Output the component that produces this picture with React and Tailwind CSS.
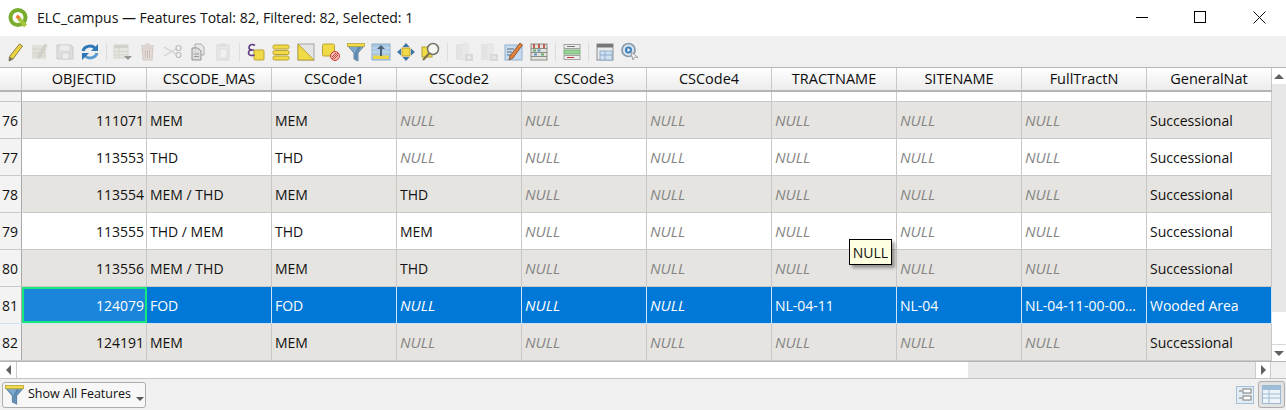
const columns = ['OBJECTID', 'CSCODE_MAS', 'CSCode1', 'CSCode2', 'CSCode3', 'CSCode4', 'TRACTNAME', 'SITENAME', 'FullTractN', 'GeneralNat']

const rows = [
  { n: 76, v: ['111071', 'MEM', 'MEM', null, null, null, null, null, null, 'Successional'] },
  { n: 77, v: ['113553', 'THD', 'THD', null, null, null, null, null, null, 'Successional'] },
  { n: 78, v: ['113554', 'MEM / THD', 'MEM', 'THD', null, null, null, null, null, 'Successional'] },
  { n: 79, v: ['113555', 'THD / MEM', 'THD', 'MEM', null, null, null, null, null, 'Successional'] },
  { n: 80, v: ['113556', 'MEM / THD', 'MEM', 'THD', null, null, null, null, null, 'Successional'] },
  { n: 81, selected: true, v: ['124079', 'FOD', 'FOD', null, null, null, 'NL-04-11', 'NL-04', 'NL-04-11-00-00...', 'Wooded Area'] },
  { n: 82, v: ['124191', 'MEM', 'MEM', null, null, null, null, null, null, 'Successional'] },
]

function Icon({ children, size = 20, dim }) {
  return <svg width={size} height={size} viewBox="0 0 20 20" className={dim ? 'opacity-70' : ''}>{children}</svg>
}

function Funnel({ size = 20 }) {
  return (
    <Icon size={size}>
      <path d="M2 4h16l-6 7v8l-4-2v-6z" fill="#7fa8cc" stroke="#5d82a5" />
      <path d="M9 11v6l2 1v-7l4-6h-3z" fill="#5a87ae" />
      <rect x="1.500" y="1.500" width="17" height="3" fill="#f1dc4c" stroke="#b7a53a" strokeWidth="0.8" />
    </Icon>
  )
}

function Sep() {
  return <div className="ml-[4px] mr-[3px] h-[18px] w-px bg-[#dcdcdc]" />
}

function Tool({ children }) {
  return <div className="flex h-[24px] w-[25px] items-center justify-center">{children}</div>
}

function Toolbar() {
  return (
    <div className="flex h-[31px] items-center bg-[#f0f0f0] pl-[2px]">
      <Tool>
        <Icon>
          <path d="M14.500 2l3 2L8 17l-4 2 .5-4.500z" fill="#ecd342" stroke="#8a8044" />
          <path d="M4.500 14.500L8 17l-4 2z" fill="#77736a" />
        </Icon>
      </Tool>
      <Tool>
        <Icon dim>
          <rect x="2" y="3" width="14" height="14" fill="#dcdbd0" />
          <path d="M2 7h14M2 11h14M2 14h14" stroke="#c8c7bb" />
          <path d="M15 2l2 1.500L10 15l-2 1 .3-2.500z" fill="#c9c8c0" stroke="#b4b3aa" strokeWidth="0.7" />
        </Icon>
      </Tool>
      <Tool>
        <Icon dim>
          <path d="M2 3h14l2 2v12H2z" fill="#d5d5d5" stroke="#bdbdbd" />
          <rect x="5" y="3.500" width="9" height="5" fill="#ececec" />
          <rect x="7" y="11" width="7" height="6" fill="#ececec" stroke="#bdbdbd" strokeWidth="0.7" />
        </Icon>
      </Tool>
      <Tool>
        <Icon>
          <path d="M3 9a7 6 0 0 1 12-3" fill="none" stroke="#2f78b7" strokeWidth="3" />
          <path d="M17 11a7 6 0 0 1-12 3" fill="none" stroke="#5a9ad0" strokeWidth="3" />
          <path d="M18 2v7h-7zM2 18v-7h7z" fill="#2f78b7" />
        </Icon>
      </Tool>
      <Sep />
      <Tool>
        <Icon dim>
          <rect x="1" y="3" width="14" height="13" fill="#e3e2da" stroke="#c9c8bf" />
          <rect x="1" y="3" width="14" height="3" fill="#c4c3ba" />
          <path d="M1 9.500h14M1 13h14M6 6v10" stroke="#c9c8bf" />
          <path d="M11 14h8l-4 4z" fill="#6f6f6f" />
        </Icon>
      </Tool>
      <Tool>
        <Icon dim>
          <rect x="3" y="3" width="13" height="2.500" fill="#d6c9c2" />
          <rect x="7" y="1.500" width="5" height="2" fill="#d6c9c2" />
          <path d="M4 6h11l-1 12H5z" fill="#dcd0ca" stroke="#c9bab2" />
          <path d="M7.500 8v8M9.500 8v8M11.500 8v8" stroke="#bdaca3" />
        </Icon>
      </Tool>
      <Tool>
        <Icon dim>
          <path d="M1 5l12 7M1 14l12-7" stroke="#c4c4c4" strokeWidth="1.200" />
          <circle cx="15.500" cy="6" r="2.500" fill="none" stroke="#a9a9a9" strokeWidth="1.200" />
          <circle cx="15.500" cy="13" r="2.500" fill="none" stroke="#a9a9a9" strokeWidth="1.200" />
        </Icon>
      </Tool>
      <Tool>
        <Icon>
          <path d="M7 2h6l3 3v8H7z" fill="#e8e8e8" stroke="#ababab" />
          <path d="M4 6h6l3 3v9H4z" fill="#dcdcdc" stroke="#949494" />
          <path d="M6 12h5M6 14.500h5" stroke="#9a9a9a" />
        </Icon>
      </Tool>
      <Tool>
        <Icon dim>
          <rect x="4" y="3" width="12" height="15" fill="#e5e5e5" stroke="#cfcfcf" />
          <rect x="7" y="1.500" width="6" height="3" fill="#d5d5d5" />
          <rect x="7" y="7" width="7" height="9" fill="#f0f0f0" stroke="#d5d5d5" />
        </Icon>
      </Tool>
      <Sep />
      <Tool>
        <Icon>
          <rect x="8" y="8" width="10" height="10" rx="1" fill="#f1da48" stroke="#b8a233" />
          <path d="M9 3.500C6 1.500 3 3 3 5.500c0 1.500 1 2.500 3 2.500-2.500 0-3.500 1.500-3.500 3s2 3.500 6 2" fill="none" stroke="#5f3a80" strokeWidth="1.600" />
          <path d="M3 8h5" stroke="#5f3a80" strokeWidth="1.400" />
        </Icon>
      </Tool>
      <Tool>
        <Icon>
          <rect x="2" y="3" width="16" height="4" rx="1.500" fill="#f1da48" stroke="#b8a233" />
          <rect x="2" y="8.500" width="16" height="4" rx="1.500" fill="#f1da48" stroke="#b8a233" />
          <rect x="2" y="14" width="16" height="4" rx="1.500" fill="#f1da48" stroke="#b8a233" />
        </Icon>
      </Tool>
      <Tool>
        <Icon>
          <rect x="2" y="2" width="16" height="16" fill="#e4e4e4" stroke="#a5a5a5" />
          <path d="M2 2l16 16H2z" fill="#f1da48" stroke="#b8a233" />
        </Icon>
      </Tool>
      <Tool>
        <Icon>
          <rect x="1.500" y="2" width="12" height="12" rx="1.500" fill="#f1da48" stroke="#b8a233" />
          <circle cx="14" cy="14" r="4.500" fill="#f1b9b0" stroke="#cf3f35" />
          <path d="M11 17l6-6M13 17l4-4M11 15l4-4" stroke="#cf3f35" strokeWidth="0.9" />
        </Icon>
      </Tool>
      <Tool><Funnel /></Tool>
      <Tool>
        <Icon>
          <rect x="1" y="2" width="18" height="16" fill="#a8c8e3" stroke="#8fb0cc" />
          <path d="M1 6h18M1 10h18" stroke="#c8dced" />
          <rect x="2" y="13.500" width="16" height="3.500" fill="#ecd648" />
          <path d="M10 3l4 4h-3v7H9V7H6z" fill="#4a6076" />
        </Icon>
      </Tool>
      <Tool>
        <Icon>
          <rect x="6" y="6" width="8" height="8" fill="#f1da48" stroke="#b8a233" />
          <path d="M10 1l3.500 4h-7zM10 19l-3.500-4h7zM1 10l4-3.500v7zM19 10l-4 3.500v-7z" fill="#3b76aa" />
        </Icon>
      </Tool>
      <Tool>
        <Icon>
          <rect x="1" y="5" width="10" height="10" fill="#f1da48" stroke="#b8a233" />
          <circle cx="12" cy="7" r="5.500" fill="#f5f5ef" stroke="#6f7267" strokeWidth="1.500" />
          <path d="M8 11.500L2 18" stroke="#7d7346" strokeWidth="2.200" />
        </Icon>
      </Tool>
      <Sep />
      <Tool>
        <Icon dim>
          <rect x="2" y="2" width="6" height="16" fill="#dedede" />
          <rect x="8" y="2" width="6" height="16" fill="#e6e6e6" stroke="#dedede" />
          <rect x="11" y="12" width="8" height="7" fill="#cfcfcf" />
          <path d="M13 15.500h4M15 13.500v4" stroke="#f2f2f2" />
        </Icon>
      </Tool>
      <Tool>
        <Icon dim>
          <rect x="2" y="2" width="6" height="16" fill="#dedede" />
          <rect x="8" y="2" width="6" height="16" fill="#e6e6e6" stroke="#dedede" />
          <rect x="11" y="12" width="8" height="7" fill="#cfcfcf" />
          <path d="M13 14l4 3M17 14l-4 3" stroke="#f2f2f2" />
        </Icon>
      </Tool>
      <Tool>
        <Icon>
          <rect x="1" y="3" width="17" height="15" fill="#c7dcf0" stroke="#8fb0cc" />
          <path d="M3 7h7M3 10h5M3 13h4" stroke="#5a6b7a" />
          <path d="M16 1l2.500 2L9 16l-4 2 1-4z" fill="#e3813a" stroke="#6d3c1a" strokeWidth="0.7" />
        </Icon>
      </Tool>
      <Tool>
        <Icon>
          <rect x="2" y="2" width="16" height="16" fill="#e4e4de" stroke="#8c8c85" />
          <path d="M2 6.500h16M2 10.500h16M2 14.500h16" stroke="#8c8c85" />
          <path d="M5 2v4M10 2v4M15 2v4" stroke="#bb4037" strokeWidth="1.600" />
          <path d="M4 7.500h3v2H4zM12 11.500h3v2h-3z" fill="#6aab6d" />
          <path d="M8.500 7.500h3v2h-3zM5 11.500h3v2H5z" fill="#5c93c3" />
        </Icon>
      </Tool>
      <Sep />
      <Tool>
        <Icon>
          <rect x="2" y="2.500" width="16" height="4" fill="#ededed" stroke="#a2a2a2" />
          <path d="M5 4.500h8" stroke="#777" />
          <rect x="2" y="8" width="16" height="4" fill="#97d495" stroke="#76b076" />
          <rect x="2" y="13.500" width="16" height="4" fill="#ededed" stroke="#a2a2a2" />
          <path d="M5 15.500h7" stroke="#c8372e" />
        </Icon>
      </Tool>
      <Sep />
      <Tool>
        <Icon>
          <rect x="2" y="2" width="16" height="16" fill="#ececec" stroke="#8b8b8b" />
          <rect x="2" y="2" width="16" height="3.500" fill="#777" />
          <rect x="5" y="9" width="12" height="9" fill="#cfe0f1" stroke="#8fb0cc" />
          <path d="M5 13h12M10 9v9" stroke="#8fb0cc" />
        </Icon>
      </Tool>
      <Tool>
        <Icon>
          <circle cx="8.500" cy="8" r="6.500" fill="#d7e3ee" stroke="#8b9aa8" strokeWidth="1.700" />
          <circle cx="8.500" cy="8" r="3.500" fill="#3b7fbd" />
          <path d="M7.500 6l3 2-3 2z" fill="#fff" />
          <path d="M11 10l2 8 1.500-3 3.500 .5z" fill="#fff" stroke="#a0a0a0" />
        </Icon>
      </Tool>
    </div>
  )
}

function Cell({ value, col, selected, current }) {
  const isNull = value === null
  let tone = 'text-[#111]'
  if (isNull) tone = selected ? 'italic text-[15px] text-white' : 'italic text-[15px] text-[#858585]'
  else if (selected) tone = 'text-white'
  let box = 'border-r border-[#c8c8c8] pl-[3px] pr-[2px]'
  if (selected) box = 'border-r border-[#cfe3f6] pl-[3px] pr-[2px]'
  if (current) box = 'border-2 border-[#17e87a] bg-[#1a85db] pl-[1px] pr-[1px]'
  return (
    <div className={`flex w-[125px] shrink-0 items-center overflow-hidden whitespace-nowrap ${box} ${col === 0 ? 'justify-end' : ''} ${tone}`}>
      {isNull ? 'NULL' : value}
    </div>
  )
}

function Row({ row }) {
  let bg = row.n === 77 || row.n === 79 ? 'bg-white' : 'bg-[#e6e4e0]'
  if (row.selected) bg = 'bg-[#0078d7]'
  return (
    <div className={`flex h-[37px] border-b text-[14px] ${row.selected ? 'border-[#cfe3f6]' : 'border-[#c8c8c8]'}`}>
      <div className="flex w-[22px] shrink-0 items-center border-r border-[#a8a8a8] bg-[#f3f3f3] pl-[2px] text-[#111]">{row.n}</div>
      <div className={`flex ${bg}`}>
        {row.v.map((v, i) => (
          <Cell key={i} value={v} col={i} selected={row.selected} current={row.selected && i === 0} />
        ))}
      </div>
    </div>
  )
}

export default function App() {
  return (
    <div className="relative h-[410px] w-[1286px] overflow-hidden bg-[#f0f0f0] font-['Open_Sans','Noto_Sans',sans-serif] text-[14px]">
      {/* title bar */}
      <div className="flex h-[36px] items-center bg-white pb-[2px]">
        <svg width="21" height="21" viewBox="0 0 21 21" className="ml-[8px] mt-[2px]">
          <circle cx="10" cy="9.500" r="7.500" fill="none" stroke="#79ad2d" strokeWidth="4" />
          <path d="M10.500 10l7 8" stroke="#a5c63c" strokeWidth="4" />
          <path d="M9.500 6.500l3 2.500-2 2.500-3-2z" fill="#ee7b2d" />
        </svg>
        <span className="ml-[8px] text-[14px] text-[#111]">ELC_campus — Features Total: 82, Filtered: 82, Selected: 1</span>
        <div className="ml-auto flex items-center">
          <div className="flex h-[34px] w-[52px] items-center justify-center">
            <div className="h-px w-[12px] bg-black" />
          </div>
          <div className="flex h-[34px] w-[64px] items-center justify-center">
            <div className="h-[12px] w-[12px] border border-black" />
          </div>
          <div className="flex h-[34px] w-[54px] items-center justify-center">
            <svg width="13" height="13" viewBox="0 0 13 13" stroke="#111" strokeWidth="1"><path d="M.5.5l12 12M12.500.5l-12 12" /></svg>
          </div>
        </div>
      </div>
      <Toolbar />

      {/* table and vertical scrollbar */}
      <div className="flex h-[295px] border-y border-[#b5b5b5] bg-white">
        <div className="w-[1272px] overflow-hidden">
          <div className="flex h-[24px] border-b-2 border-[#b5b5b5] bg-gradient-to-b from-white to-[#ececec]">
            <div className="w-[22px] shrink-0 border-r border-[#c8c8c8]" />
            {columns.map(c => (
              <div key={c} className="flex w-[125px] shrink-0 items-center justify-center border-r border-[#c8c8c8] text-[14.5px] text-[#0c0c0c]">
                {c}
              </div>
            ))}
          </div>
          <div className="flex h-[10px] border-b border-[#c8c8c8]">
            <div className="w-[22px] shrink-0 border-r border-[#a8a8a8] bg-[#f3f3f3]" />
            {columns.map(c => <div key={c} className="w-[125px] shrink-0 border-r border-[#c8c8c8]" />)}
          </div>
          {rows.map(r => <Row key={r.n} row={r} />)}
        </div>
        <div className="flex w-[14px] flex-col bg-white">
          <div className="flex h-[16px] items-center justify-center">
            <div className="h-0 w-0 border-x-[5px] border-b-[5px] border-x-transparent border-b-[#606060]" />
          </div>
          <div className="h-[228px] bg-[#e6e6e6]" />
          <div className="flex-1" />
          <div className="flex h-[17px] items-center justify-center border-t border-[#d8d8d8]">
            <div className="h-0 w-0 border-x-[5px] border-t-[5px] border-x-transparent border-t-[#606060]" />
          </div>
        </div>
      </div>

      {/* horizontal scrollbar */}
      <div className="flex h-[17px] border-b border-[#c4c4c4] bg-white">
        <div className="flex w-[17px] items-center justify-center border-r border-[#ccc]">
          <div className="h-0 w-0 border-y-[5px] border-r-[5px] border-y-transparent border-r-[#606060]" />
        </div>
        <div className="w-[951px]" />
        <div className="w-[287px] bg-[#e8e8e8]" />
        <div className="flex w-[16px] items-center justify-center border-x border-[#ccc] bg-white">
          <div className="h-0 w-0 border-y-[5px] border-l-[5px] border-y-transparent border-l-[#606060]" />
        </div>
        <div className="flex-1 bg-[#f0f0f0]" />
      </div>

      {/* footer */}
      <div className="flex h-[31px] items-center justify-between pl-[2px] pr-[1px]">
        <div className="flex h-[26px] w-[144px] items-center whitespace-nowrap rounded-[3px] border border-[#adadad] bg-[#f7f7f7] pl-[1px] text-[12.5px] text-[#111]">
          <Funnel size={21} />
          <span className="ml-[3px]">Show All Features</span>
          <div className="ml-[5px] mt-[9px] h-0 w-0 border-x-[4px] border-t-[4px] border-x-transparent border-t-[#555]" />
        </div>
        <div className="flex items-center gap-[4px]">
          <svg width="18" height="18" viewBox="0 0 18 18">
            <rect x=".5" y=".5" width="17" height="17" fill="#e3edf6" stroke="#a8c0d6" />
            <rect x="7" y="3" width="8" height="4" fill="#fff" stroke="#7b7b7b" />
            <rect x="7" y="10" width="8" height="4" fill="#fff" stroke="#7b7b7b" />
            <path d="M3 5h3M3 12h3" stroke="#7b7b7b" />
          </svg>
          <div className="flex h-[27px] w-[27px] items-center justify-center rounded-[3px] border border-[#adadad] bg-[#e2e2e2]">
            <svg width="19" height="19" viewBox="0 0 19 19">
              <rect x=".5" y=".5" width="18" height="18" fill="#eef4fa" stroke="#9db9d2" />
              <rect x="1" y="1" width="17" height="4" fill="#9dbdd9" />
              <path d="M1 9h17M1 13h17M7 5v13" stroke="#9db9d2" />
            </svg>
          </div>
        </div>
      </div>

      {/* cell tooltip */}
      <div className="absolute left-[849px] top-[239px] flex h-[26px] w-[43px] items-center justify-center border border-black bg-[#ffffe1] text-[14px] text-[#111] shadow-[3px_3px_3px_rgba(0,0,0,0.35)]">
        NULL
      </div>
    </div>
  )
}
